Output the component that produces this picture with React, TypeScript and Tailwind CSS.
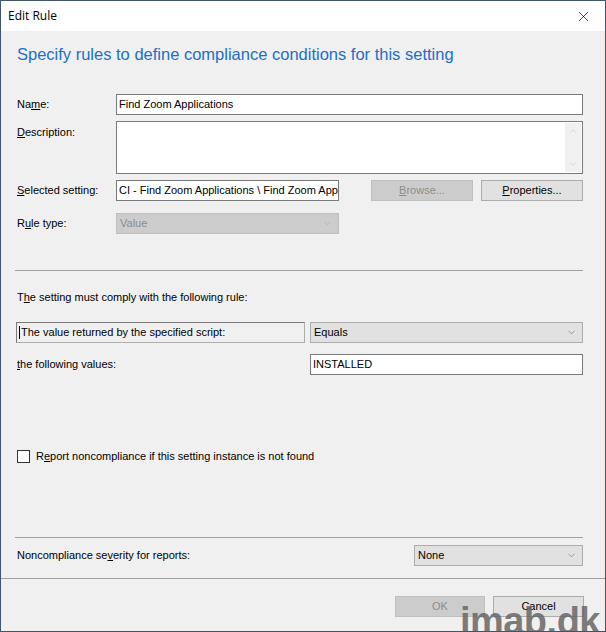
import { ChevronDown, ChevronUp, X } from "lucide-react";

const font = { fontFamily: '"Liberation Sans", Arial, sans-serif' };

function Key({ c }: { c: string }) {
  return <span className="underline underline-offset-[1px]">{c}</span>;
}

function Btn({ children, disabled, w }: { children: React.ReactNode; disabled?: boolean; w: string }) {
  return (
    <div
      className={`${w} h-[21px] flex items-center justify-center border text-[11px] ${
        disabled ? "bg-[#cccccc] border-[#bfbfbf] text-[#8d8d8d]" : "bg-[#e1e1e1] border-[#adadad] text-black"
      }`}
    >
      {children}
    </div>
  );
}

function Select({ value, w, disabled }: { value: string; w: string; disabled?: boolean }) {
  return (
    <div
      className={`${w} h-[21px] flex items-center justify-between border pl-[3px] pr-[5px] text-[11px] ${
        disabled ? "bg-[#cccccc] border-[#bfbfbf] text-[#8d8d8d]" : "bg-[#e1e1e1] border-[#adadad] text-black"
      }`}
    >
      <span>{value}</span>
      <ChevronDown size={11} strokeWidth={1.2} className={disabled ? "text-[#a8a8a8]" : "text-[#606060]"} />
    </div>
  );
}

export default function App() {
  return (
    <div
      className="w-[606px] h-[632px] border border-[#40546a] bg-[#f0f0f0] flex flex-col relative overflow-hidden text-black"
      style={font}
    >
      {/* title bar */}
      <div className="h-[30px] bg-white flex items-center justify-between pl-[7px] pr-[13px] shrink-0">
        <span className="text-[12px]" style={{ fontFamily: '"Open Sans", sans-serif' }}>
          Edit Rule
        </span>
        <X size={17} strokeWidth={1} className="text-black" />
      </div>

      <div className="pl-[15px] pr-[22px] flex flex-col flex-1">
        <div className="text-[#1c6fc9] text-[16.5px] pt-[11px] pl-[1px] h-[63px]">
          Specify rules to define compliance conditions for this setting
        </div>

        {/* name */}
        <div className="flex items-center h-[21px] text-[11px]">
          <div className="w-[100px] pl-[1px]">
            Na<Key c="m" />e:
          </div>
          <div className="flex-1 h-[21px] bg-white border border-[#7a7a7a] flex items-center px-[2px]">
            Find Zoom Applications
          </div>
        </div>

        {/* description */}
        <div className="flex items-start mt-[6px] text-[11px]">
          <div className="w-[100px] pl-[1px] pt-[3px]">
            <Key c="D" />escription:
          </div>
          <div className="flex-1 h-[53px] bg-white border border-[#7a7a7a] flex justify-end p-[1px]">
            <div className="w-[16px] h-full bg-[#f0f0f0] flex flex-col items-center justify-between py-[3px]">
              <ChevronUp size={10} strokeWidth={1.3} className="text-[#c2c2c2]" />
              <ChevronDown size={10} strokeWidth={1.3} className="text-[#c2c2c2]" />
            </div>
          </div>
        </div>

        {/* selected setting */}
        <div className="flex items-center mt-[6px] text-[11px]">
          <div className="w-[100px] pl-[1px]">
            <Key c="S" />elected setting:
          </div>
          <div className="w-[223px] h-[21px] bg-white border border-[#7a7a7a] flex items-center pl-[2px] overflow-hidden whitespace-nowrap">
            CI - Find Zoom Applications \ Find Zoom Applications
          </div>
          <div className="ml-[32px]">
            <Btn w="w-[102px]" disabled>
              <Key c="B" />rowse...
            </Btn>
          </div>
          <div className="ml-[8px]">
            <Btn w="w-[102px]">
              <Key c="P" />roperties...
            </Btn>
          </div>
        </div>

        {/* rule type */}
        <div className="flex items-center mt-[12px] text-[11px]">
          <div className="w-[100px] pl-[1px]">
            R<Key c="u" />le type:
          </div>
          <Select value="Value" w="w-[223px]" disabled />
        </div>

        <div className="mt-[36px] h-px bg-[#a0a0a0] ml-[-1px]" />

        <div className="mt-[20px] pl-[1px] text-[11px] h-[12px] leading-[12px]">
          T<Key c="h" />e setting must comply with the following rule:
        </div>

        <div className="flex items-center mt-[19px] text-[11px]">
          <div className="w-[289px] h-[21px] border border-[#adadad] border-t-[#7a7a7a] border-l-[#7a7a7a] flex items-center pl-[2px] whitespace-nowrap">
            <span className="w-px h-[13px] bg-black mr-px" />
            The value returned by the specified script:
          </div>
          <div className="ml-[5px] flex-1">
            <Select value="Equals" w="w-full" />
          </div>
        </div>

        <div className="flex items-center mt-[11px] text-[11px]">
          <div className="w-[294px] pl-[1px]">
            <Key c="t" />he following values:
          </div>
          <div className="flex-1 h-[21px] bg-white border border-[#7a7a7a] flex items-center px-[2px]">
            INSTALLED
          </div>
        </div>

        <div className="flex items-center mt-[73px] text-[11px] pl-[1px]">
          <div className="w-[13px] h-[13px] bg-white border border-[#333333]" />
          <span className="ml-[6px]">
            R<Key c="e" />port noncompliance if this setting instance is not found
          </span>
        </div>

        <div className="mt-[72px] h-px bg-[#a0a0a0] ml-[-1px]" />

        <div className="flex items-center mt-[7px] text-[11px]">
          <div className="flex-1 pl-[1px]">
            Noncompliance se<Key c="v" />erity for reports:
          </div>
          <Select value="None" w="w-[169px]" />
        </div>
      </div>

      <div className="h-px bg-[#a0a0a0] mt-[12px]" />

      <div className="flex justify-end gap-[8px] pr-[21px] pt-[17px] pb-[14px] text-[11px]">
        <Btn w="w-[90px]" disabled>
          OK
        </Btn>
        <Btn w="w-[91px]">Cancel</Btn>
      </div>

      {/* watermark */}
      <div className="absolute right-[5px] bottom-[-9px] text-[38px] font-bold text-[#666666]/85 tracking-[-0.5px] leading-none">
        imab.dk
      </div>
    </div>
  );
}
